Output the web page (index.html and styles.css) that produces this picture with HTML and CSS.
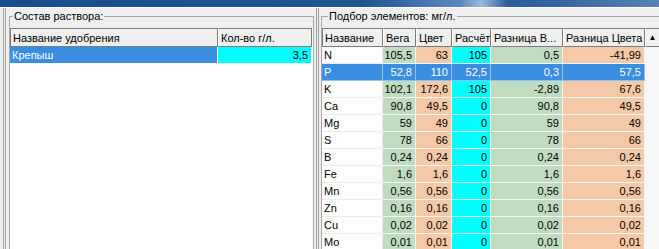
FILE: index.html
```html
<!DOCTYPE html>
<html lang="ru">

<head>
  <meta charset="UTF-8">
  <title>Состав раствора</title>
  <link rel="stylesheet" href="styles.css">
</head>

<body>
  <div class="titlebar"></div>

  <div class="main">
    <div class="pane pane-left">
      <fieldset class="group">
        <legend>Состав раствора:</legend>
        <div class="grid grid-left">
          <table>
            <colgroup>
              <col class="w-fert">
              <col class="w-qty">
            </colgroup>
            <tr>
              <th>Название удобрения</th>
              <th>Кол-во г/л.</th>
            </tr>
            <tr>
              <td class="sel">Крепыш</td>
              <td class="num calc">3,5</td>
            </tr>
          </table>
        </div>
      </fieldset>
    </div>

    <div class="pane pane-right">
      <fieldset class="group group-right">
        <legend>Подбор элементов: мг/л.</legend>
        <div class="grid grid-right">
          <table>
            <colgroup>
              <col class="w-name">
              <col class="w-vega">
              <col class="w-cvet">
              <col class="w-calc">
              <col class="w-dv">
              <col class="w-dc">
            </colgroup>
            <tr>
              <th>Название</th>
              <th>Вега</th>
              <th>Цвет</th>
              <th>Расчёт</th>
              <th>Разница В...</th>
              <th>Разница Цвета</th>
            </tr>
            <tr><td>N</td><td class="num green">105,5</td><td class="num peach">63</td><td class="num calc">105</td><td class="num green">0,5</td><td class="num peach">-41,99</td></tr>
            <tr class="sel"><td>P</td><td class="num">52,8</td><td class="num">110</td><td class="num">52,5</td><td class="num">0,3</td><td class="num">57,5</td></tr>
            <tr><td>K</td><td class="num green">102,1</td><td class="num peach">172,6</td><td class="num calc">105</td><td class="num green">-2,89</td><td class="num peach">67,6</td></tr>
            <tr><td>Ca</td><td class="num green">90,8</td><td class="num peach">49,5</td><td class="num calc">0</td><td class="num green">90,8</td><td class="num peach">49,5</td></tr>
            <tr><td>Mg</td><td class="num green">59</td><td class="num peach">49</td><td class="num calc">0</td><td class="num green">59</td><td class="num peach">49</td></tr>
            <tr><td>S</td><td class="num green">78</td><td class="num peach">66</td><td class="num calc">0</td><td class="num green">78</td><td class="num peach">66</td></tr>
            <tr><td>B</td><td class="num green">0,24</td><td class="num peach">0,24</td><td class="num calc">0</td><td class="num green">0,24</td><td class="num peach">0,24</td></tr>
            <tr><td>Fe</td><td class="num green">1,6</td><td class="num peach">1,6</td><td class="num calc">0</td><td class="num green">1,6</td><td class="num peach">1,6</td></tr>
            <tr><td>Mn</td><td class="num green">0,56</td><td class="num peach">0,56</td><td class="num calc">0</td><td class="num green">0,56</td><td class="num peach">0,56</td></tr>
            <tr><td>Zn</td><td class="num green">0,16</td><td class="num peach">0,16</td><td class="num calc">0</td><td class="num green">0,16</td><td class="num peach">0,16</td></tr>
            <tr><td>Cu</td><td class="num green">0,02</td><td class="num peach">0,02</td><td class="num calc">0</td><td class="num green">0,02</td><td class="num peach">0,02</td></tr>
            <tr><td>Mo</td><td class="num green">0,01</td><td class="num peach">0,01</td><td class="num calc">0</td><td class="num green">0,01</td><td class="num peach">0,01</td></tr>
          </table>
          <div class="vscroll">
            <div class="arrow">&#9650;</div>
          </div>
        </div>
      </fieldset>
    </div>
  </div>
</body>

</html>
```

FILE: styles.css
```css
body {
  margin: 0;
  width: 659px;
  height: 249px;
  overflow: hidden;
  background: #efefef;
  font-family: "Liberation Sans", Arial, sans-serif;
  font-size: 11px;
  color: #000;
}

.titlebar {
  height: 7px;
  background: linear-gradient(to right, #1b4d8c 0%, #20548f 55%, #5f89bd 70%, #9dbbe0 73%, #2c5c98 77%, #3a679f 86%, #5a82b6 100%);
  border-bottom: 1px solid #fff;
}

.main {
  display: flex;
  height: 241px;
}

.pane {
  height: 100%;
}

.pane-left {
  width: 305px;
  margin-left: 3px;
  padding: 0 2px 0 3px;
  border-left: 3px double #a0a0a0;
  border-right: 3px double #a0a0a0;
}

.pane-right {
  flex: 1;
  margin-left: 2px;
  overflow: hidden;
}

/* рамка группы */
.group {
  margin: 1px 0 0;
  padding: 5px 0 0;
  border: 1px solid #a8a8a8;
  height: 240px;
  box-sizing: border-box;
}

.group legend {
  margin-left: 3px;
  padding: 0 1px;
  line-height: 14px;
  color: #000;
}

.group-right {
  width: 345px;
}

.group-right legend {
  margin-left: 6px;
}

.grid {
  display: flex;
  background: #fff;
  height: 240px;
}

table {
  table-layout: fixed;
  border-collapse: separate;
  border-spacing: 0;
  align-self: flex-start;
}

.grid-left table {
  width: 302px;
}

.grid-right table {
  width: 323px;
}

.w-fert { width: 208px; }
.w-qty { width: 94px; }

.w-name { width: 61px; }
.w-vega { width: 33px; }
.w-cvet { width: 36px; }
.w-calc { width: 39px; }
.w-dv { width: 72px; }
.w-dc { width: 82px; }

th {
  height: 17px;
  padding: 0 0 0 2px;
  background: #efefef;
  border: 1px solid #7c7c7c;
  border-left-color: #fff;
  text-align: left;
  font-weight: normal;
  white-space: nowrap;
  overflow: hidden;
}

th:first-child {
  border-left-color: #7c7c7c;
}

td {
  height: 16px;
  padding: 0 0 0 2px;
  border-right: 1px solid #ececec;
  border-bottom: 1px solid #ececec;
  white-space: nowrap;
  overflow: hidden;
  line-height: 16px;
}

.num {
  text-align: right;
  padding: 0 3px 0 0;
}

.green {
  background: #c0dcc0;
  border-color: #f4f4f4;
}

.peach {
  background: #f6c9a6;
  border-color: #f4f4f4;
}

.calc {
  background: #00ffff;
  border-color: #f4f4f4;
}

.sel,
.sel td {
  background: #3a8ee2;
  color: #fff;
  border-color: #8ec0f0;
}

.grid-left .sel {
  border-color: #fff;
}

.vscroll {
  width: 15px;
  background: #f6f6f6;
}

.arrow {
  height: 17px;
  border: 1px solid #7c7c7c;
  border-left-color: #fff;
  background: #efefef;
  font-size: 8px;
  line-height: 17px;
  text-align: center;
  color: #000;
}
```
